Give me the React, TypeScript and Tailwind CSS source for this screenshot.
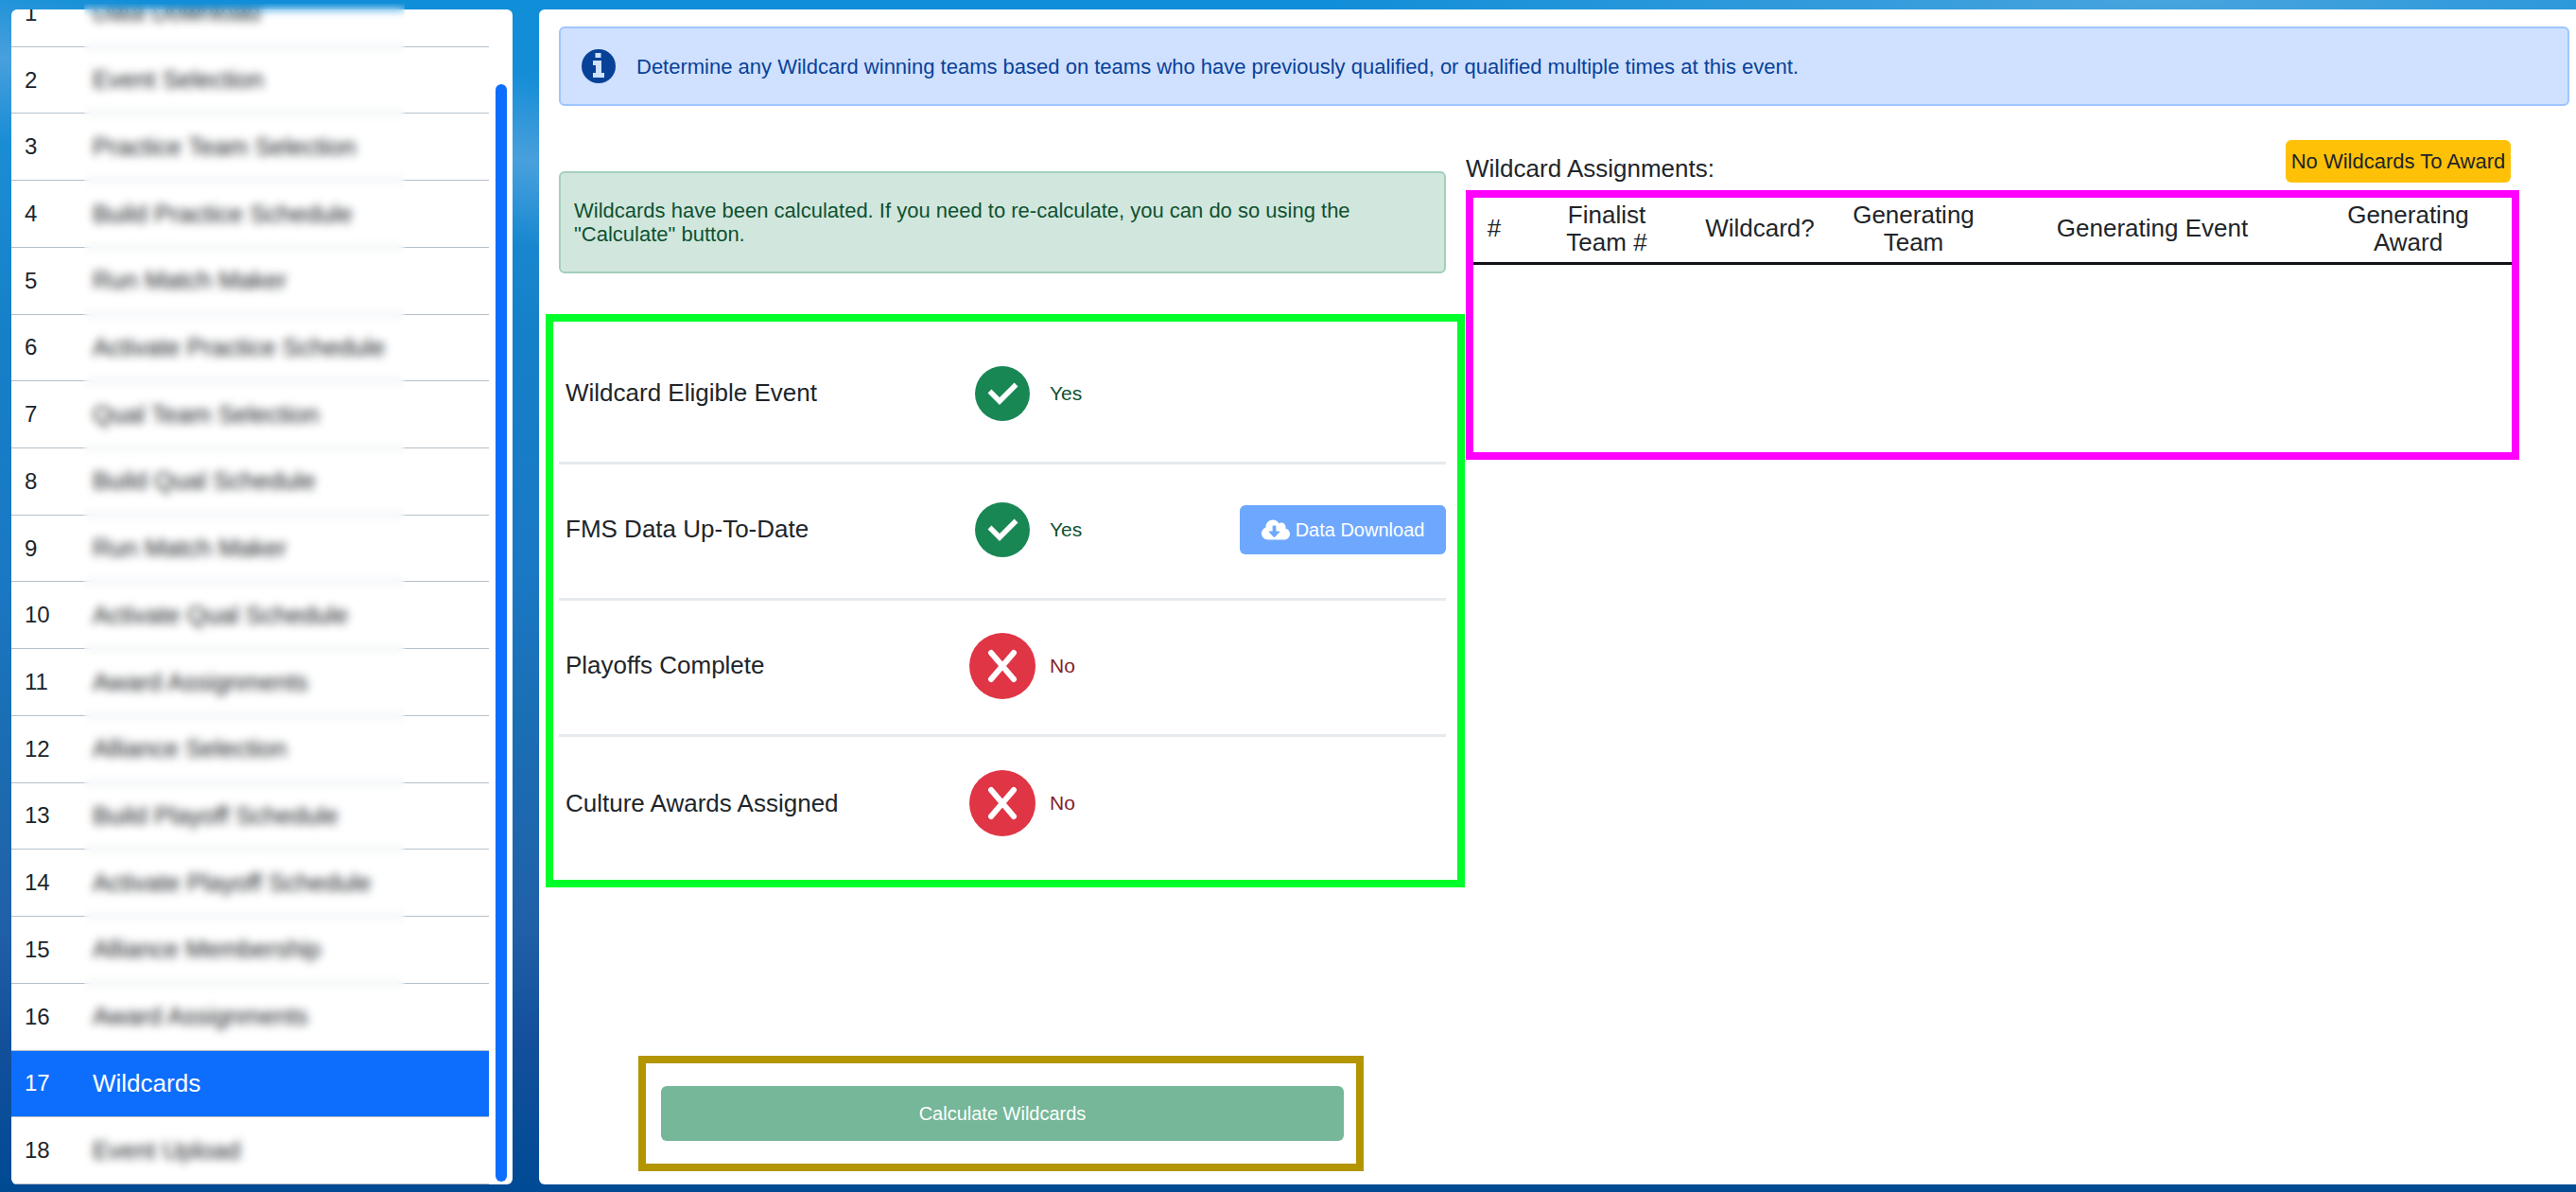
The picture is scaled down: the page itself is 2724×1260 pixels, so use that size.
import { FaCloudDownloadAlt } from "react-icons/fa";

type Step = { id: number; label: string; redacted: boolean };

const steps: Step[] = [
  "Data Download",
  "Event Selection",
  "Practice Team Selection",
  "Build Practice Schedule",
  "Run Match Maker",
  "Activate Practice Schedule",
  "Qual Team Selection",
  "Build Qual Schedule",
  "Run Match Maker",
  "Activate Qual Schedule",
  "Award Assignments",
  "Alliance Selection",
  "Build Playoff Schedule",
  "Activate Playoff Schedule",
  "Alliance Membership",
  "Award Assignments",
  "Wildcards",
  "Event Upload",
].map((label, i) => ({ id: i + 1, label, redacted: label !== "Wildcards" }));

const checks = [
  { label: "Wildcard Eligible Event", ok: true, action: false },
  { label: "FMS Data Up-To-Date", ok: true, action: true },
  { label: "Playoffs Complete", ok: false, action: false },
  { label: "Culture Awards Assigned", ok: false, action: false },
];

function CrossCircle() {
  return (
    <svg viewBox="0 0 70 70" className="size-[70px]" aria-hidden="true">
      <circle cx="35" cy="35" r="35" fill="#e03545" />
      <path d="M23 21 47 49M47 21 23 49" stroke="#fff" strokeWidth="6" strokeLinecap="round" />
    </svg>
  );
}

function CheckCircle() {
  return (
    <svg viewBox="0 0 58 58" className="size-[58px]" aria-hidden="true">
      <circle cx="29" cy="29" r="29" fill="#198754" />
      <path d="M15.5 26.5 26 37 43.5 19.5" stroke="#fff" strokeWidth="5.5" fill="none" />
    </svg>
  );
}

function InfoCircle() {
  return (
    <svg viewBox="0 0 36 36" className="size-[36px] shrink-0" aria-hidden="true">
      <circle cx="18" cy="18" r="18" fill="#084298" />
      <path d="M14.5 4h6v5h-6zM12 12h9v13h3v5H12v-5h3v-8h-3z" fill="#cfe2ff" />
    </svg>
  );
}

function Sidebar() {
  return (
    <aside className="relative h-full w-[530px] shrink-0">
      <div className="flex h-full overflow-hidden rounded-md bg-white">
        <ul className="-mt-[31px] flex w-[506px] flex-col">
          {steps.map((s) => (
            <li key={s.id} className="flex flex-1">
              <a
                href={`#step-${s.id}`}
                aria-current={s.redacted ? undefined : "page"}
                className={
                  s.redacted
                    ? "flex w-full items-center border-b border-[#b4c0ca] text-[#212529]"
                    : "flex w-full items-center border-b border-[#b4c0ca] bg-[#0d6efd] text-white"
                }
              >
                <span className="w-[86px] pl-[14px] text-[24px]">{s.id}</span>
                <span className="text-[26px]">{s.label}</span>
              </a>
            </li>
          ))}
        </ul>
        <div className="flex flex-1 pt-[79px] pr-[6px] pb-[3px] pl-[7px]">
          <div className="w-[12px] rounded-full bg-[#0d6efd]" />
        </div>
      </div>
      <div className="absolute -top-1.5 bottom-[144px] left-[77px] w-[339px] backdrop-blur-[5px]" />
      <div className="absolute bottom-1 left-[77px] h-[64px] w-[339px] backdrop-blur-[5px]" />
    </aside>
  );
}

function Requirements() {
  return (
    <div className="ml-[7px] border-8 border-[#00ff2a] pt-[7px] pr-3 pb-[7px] pl-[6px]">
      {checks.map((c, i) => (
        <div
          key={c.label}
          className={
            i < checks.length - 1
              ? "flex h-36 items-center border-b-3 border-[#e6eaee] pb-1 pl-[7px]"
              : "flex h-36 items-center pb-1 pl-[7px]"
          }
        >
          <span className="w-[427px] text-[26px]">{c.label}</span>
          <span className="flex w-[85px] items-center">
            <span className="flex w-[70px] justify-center">{c.ok ? <CheckCircle /> : <CrossCircle />}</span>
          </span>
          <span className={c.ok ? "text-[21px] text-[#0f5132]" : "text-[21px] text-[#842029]"}>{c.ok ? "Yes" : "No"}</span>
          {c.action && (
            <button type="button" className="ml-auto flex h-[52px] w-[218px] items-center justify-center gap-1.5 rounded-md bg-[#6ea8fe] text-[20px] text-white">
              <FaCloudDownloadAlt className="h-[24px] w-[30px]" aria-hidden="true" />
              Data Download
            </button>
          )}
        </div>
      ))}
    </div>
  );
}

function Assignments() {
  return (
    <section className="mr-[60px] flex flex-col pt-9 pl-px">
      <div className="flex items-start justify-between pr-[9px]">
        <h2 className="pt-4 text-[26px] leading-7">Wildcard Assignments:</h2>
        <span className="flex h-[45px] w-[238px] items-center justify-center rounded-md bg-[#ffc107] text-[22px] whitespace-nowrap">
          No Wildcards To Award
        </span>
      </div>
      <div className="mt-2 h-[285px] border-8 border-[#ff00ff]">
        <table className="w-full table-fixed text-center text-[26px] leading-[29px]">
          <colgroup>
            <col className="w-[44px]" />
            <col className="w-[194px]" />
            <col className="w-[130px]" />
            <col className="w-[195px]" />
            <col className="w-[310px]" />
            <col className="w-[225px]" />
          </colgroup>
          <thead>
            <tr className="h-[69px] border-b-3 border-[#111318]">
              <th className="pb-0.5 font-normal">#</th>
              <th className="pb-0.5 font-normal">Finalist<br />Team #</th>
              <th className="pb-0.5 font-normal">Wildcard?</th>
              <th className="pb-0.5 font-normal">Generating<br />Team</th>
              <th className="pb-0.5 font-normal">Generating Event</th>
              <th className="pb-0.5 pl-1.5 font-normal">Generating<br />Award</th>
            </tr>
          </thead>
          <tbody />
        </table>
      </div>
    </section>
  );
}

export default function App() {
  return (
    <div className="flex h-screen gap-[28px] overflow-hidden bg-[radial-gradient(ellipse_900px_120px_at_84%_0%,#48a4de_0%,transparent_100%),linear-gradient(191deg,transparent_28%,#48a0dc_33%,transparent_38%),linear-gradient(180deg,#108ed8_0%,#1b8cd4_14%,#1580c8_28%,#1a78c4_48%,#1a6fb4_60%,#2060a8_78%,#14509c_87%,#004a94_100%)] pt-[10px] pb-2 pl-[12px] font-['Liberation_Sans',Arial,sans-serif] text-[#212529]">
      <Sidebar />
      <main className="flex min-w-0 flex-1 flex-col rounded-l-md bg-white">
        <div className="mt-[18px] mr-[7px] ml-[21px] flex h-[84px] items-center gap-[22px] rounded-md border-2 border-[#9ec5fe] bg-[#d0e0ff] pl-[22px] text-[22px] text-[#084298]" role="status">
          <InfoCircle />
          Determine any Wildcard winning teams based on teams who have previously qualified, or qualified multiple times at this event.
        </div>
        <div className="grid min-h-0 flex-1 grid-cols-[979fr_1175fr]">
          <section className="flex flex-col">
            <div className="mt-[69px] mr-5 mb-[43px] ml-[21px] rounded-md border-2 border-[#a3cfbb] bg-[#d1e7dd] py-[27px] pr-4 pl-[14px] text-[22px] leading-[25px] text-[#0f5132]" role="status">
              Wildcards have been calculated. If you need to re-calculate, you can do so using the "Calculate" button.
            </div>
            <Requirements />
            <div className="mt-auto mr-[107px] mb-[14px] ml-[105px] flex border-8 border-[#b39500] py-6 pr-[13px] pl-4">
              <button type="button" className="h-[58px] flex-1 rounded-md bg-[#75b798] text-[20px] text-white">
                Calculate Wildcards
              </button>
            </div>
          </section>
          <Assignments />
        </div>
      </main>
    </div>
  );
}
